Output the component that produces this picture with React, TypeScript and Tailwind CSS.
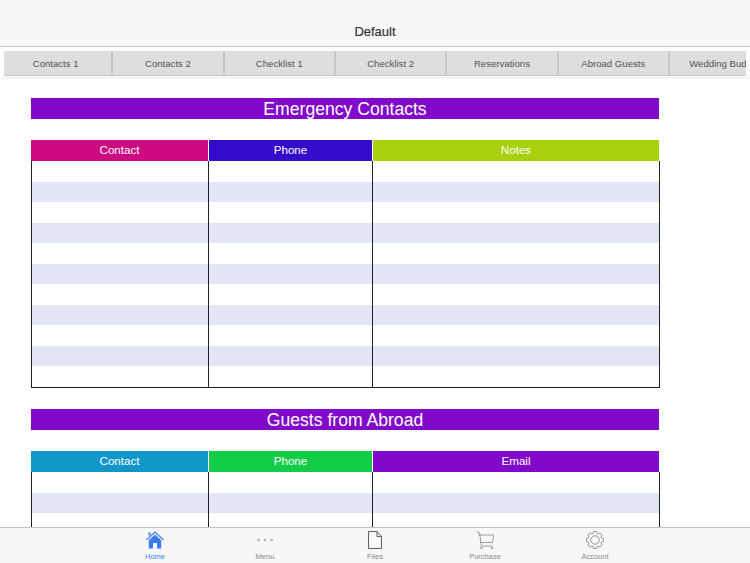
import React from 'react';

const tabs = ['Contacts 1', 'Contacts 2', 'Checklist 1', 'Checklist 2', 'Reservations', 'Abroad Guests', 'Wedding Budget'];

const gearPath = () => {
  const pts: string[] = [];
  for (let i = 0; i < 8; i++) {
    const a = (i * Math.PI) / 4;
    const at = (r: number, d: number) => `${(9 + r * Math.cos(a + d)).toFixed(2)} ${(9 + r * Math.sin(a + d)).toFixed(2)}`;
    pts.push(`${i === 0 ? 'M' : 'L'}${at(6.9, -0.3)} L${at(8.7, -0.17)} L${at(8.7, 0.17)} L${at(6.9, 0.3)}`);
  }
  return pts.join(' ') + ' Z';
};

const HomeIcon = () => (
  <svg width="18" height="18" viewBox="0 0 18 18">
    <path d="M0.5 9 L9 1 L17.5 9" fill="none" stroke="#3b7cf5" strokeWidth="1.2" />
    <path d="M2.8 9.2 L9 3.4 L15.2 9.2 V17.5 H11 V12 H7 V17.5 H2.8 Z" fill="#3b7cf5" />
    <rect x="2.5" y="1.5" width="2" height="3" fill="#3b7cf5" />
  </svg>
);

const DotsIcon = () => (
  <svg width="18" height="18" viewBox="0 0 18 18" fill="none" stroke="#8a8a8a" strokeWidth="0.7">
    <circle cx="2.5" cy="9" r="1" />
    <circle cx="9" cy="9" r="1" />
    <circle cx="15.5" cy="9" r="1" />
  </svg>
);

const FileIcon = () => (
  <svg width="14" height="18" viewBox="0 0 14 18" fill="none" stroke="#5f5f5f" strokeWidth="1">
    <path d="M0.5 0.5 H9 L13.5 5.5 V17.5 H0.5 Z" />
    <path d="M9 0.5 V5.5 H13.5" />
  </svg>
);

const CartIcon = () => (
  <svg width="18" height="18" viewBox="0 0 18 18" fill="none" stroke="#858585" strokeWidth="0.8">
    <path d="M0.3 0.7 L3.7 2 L5.3 15 H16.5" />
    <path d="M2 4 H17.8 L16.5 11.5 H4.4" />
    <circle cx="5.5" cy="16.8" r="0.9" />
    <circle cx="16" cy="16.8" r="0.9" />
  </svg>
);

const GearIcon = () => (
  <svg width="18" height="18" viewBox="0 0 18 18" fill="none" stroke="#7a7a7a" strokeWidth="0.8" strokeLinejoin="round">
    <path d={gearPath()} />
    <circle cx="9" cy="9" r="4.2" />
  </svg>
);

const Section = ({ title, headers, rows }: { title: string; headers: { label: string; color: string }[]; rows: number }) => (
  <div className="w-[628px]">
    <div className="h-[21px] bg-[#8209ca] text-center text-[17.6px] leading-[22.5px] text-white">{title}</div>
    <div className="mt-[21px] grid h-[21px] grid-cols-[178px_164px_286px] text-center text-[11.6px] leading-[20px] text-white">
      {headers.map((h, i) => (
        <div key={h.label} className={`${h.color} ${i < 2 ? 'border-r border-white' : ''}`}>{h.label}</div>
      ))}
    </div>
    <div className="grid w-[629px] grid-cols-[177px_164px_287px] border-b border-l border-[#222222]">
      {Array.from({ length: rows }).map((_, r) => (
        <React.Fragment key={r}>
          <div className={`h-[20.5px] border-r border-[#222222] ${r % 2 ? 'bg-[#e5e5f8]' : 'bg-white'}`} />
          <div className={`h-[20.5px] border-r border-[#222222] ${r % 2 ? 'bg-[#e5e5f8]' : 'bg-white'}`} />
          <div className={`h-[20.5px] border-r border-[#222222] ${r % 2 ? 'bg-[#e5e5f8]' : 'bg-white'}`} />
        </React.Fragment>
      ))}
    </div>
  </div>
);

const TabItem = ({ label, active, children }: { label: string; active?: boolean; children: React.ReactNode }) => (
  <div className={`flex w-[110px] flex-col items-center ${active ? 'text-[#3b7cf5]' : 'text-[#8a8a8a]'}`}>
    <div className="flex h-[19px] items-center justify-center">{children}</div>
    <span className="mt-[3px] text-[7.5px] leading-[9px]">{label}</span>
  </div>
);

export default function App() {
  return (
    <div className="flex h-[563px] w-[750px] flex-col overflow-hidden bg-white font-['Liberation_Sans',sans-serif]">
      <div className="h-[47px] shrink-0 border-b border-[#c4c4c4] bg-[#f8f8f8] pt-[24px] text-center text-[13px] leading-[16px] text-[#333333] [-webkit-text-stroke:0.2px_#333333]">
        Default
      </div>

      <div className="h-[32px] shrink-0 border-b-2 border-[#f3f3f3] px-[4px] pt-[4px]">
        <div className="flex h-[25px] overflow-hidden">
          {tabs.map((t, i) => (
            <div
              key={t}
              className={`shrink-0 whitespace-nowrap border-r-2 border-b border-[#c8c8c8] bg-[#dedede] text-center text-[9.6px] leading-[25px] text-[#555555] ${i === 0 ? 'w-[109.3px] pr-[4px]' : 'w-[111.33px]'}`}
            >
              {t}
            </div>
          ))}
        </div>
      </div>

      <div className="min-h-0 flex-1 overflow-hidden pl-[31px] pt-[19px]">
        <Section
          title="Emergency Contacts"
          rows={11}
          headers={[
            { label: 'Contact', color: 'bg-[#cd0a80]' },
            { label: 'Phone', color: 'bg-[#340bca]' },
            { label: 'Notes', color: 'bg-[#a8d00b]' },
          ]}
        />
        <div className="mt-[21.5px]">
          <Section
            title="Guests from Abroad"
            rows={6}
            headers={[
              { label: 'Contact', color: 'bg-[#1197ca]' },
              { label: 'Phone', color: 'bg-[#13cd48]' },
              { label: 'Email', color: 'bg-[#8209ca]' },
            ]}
          />
        </div>
      </div>

      <div className="flex h-[36px] shrink-0 items-start justify-center border-t border-[#c4c4c4] bg-[#f8f8f8] pt-[2px]">
        <TabItem label="Home" active><HomeIcon /></TabItem>
        <TabItem label="Menu"><DotsIcon /></TabItem>
        <TabItem label="Files"><FileIcon /></TabItem>
        <TabItem label="Purchase"><CartIcon /></TabItem>
        <TabItem label="Account"><GearIcon /></TabItem>
      </div>
    </div>
  );
}
